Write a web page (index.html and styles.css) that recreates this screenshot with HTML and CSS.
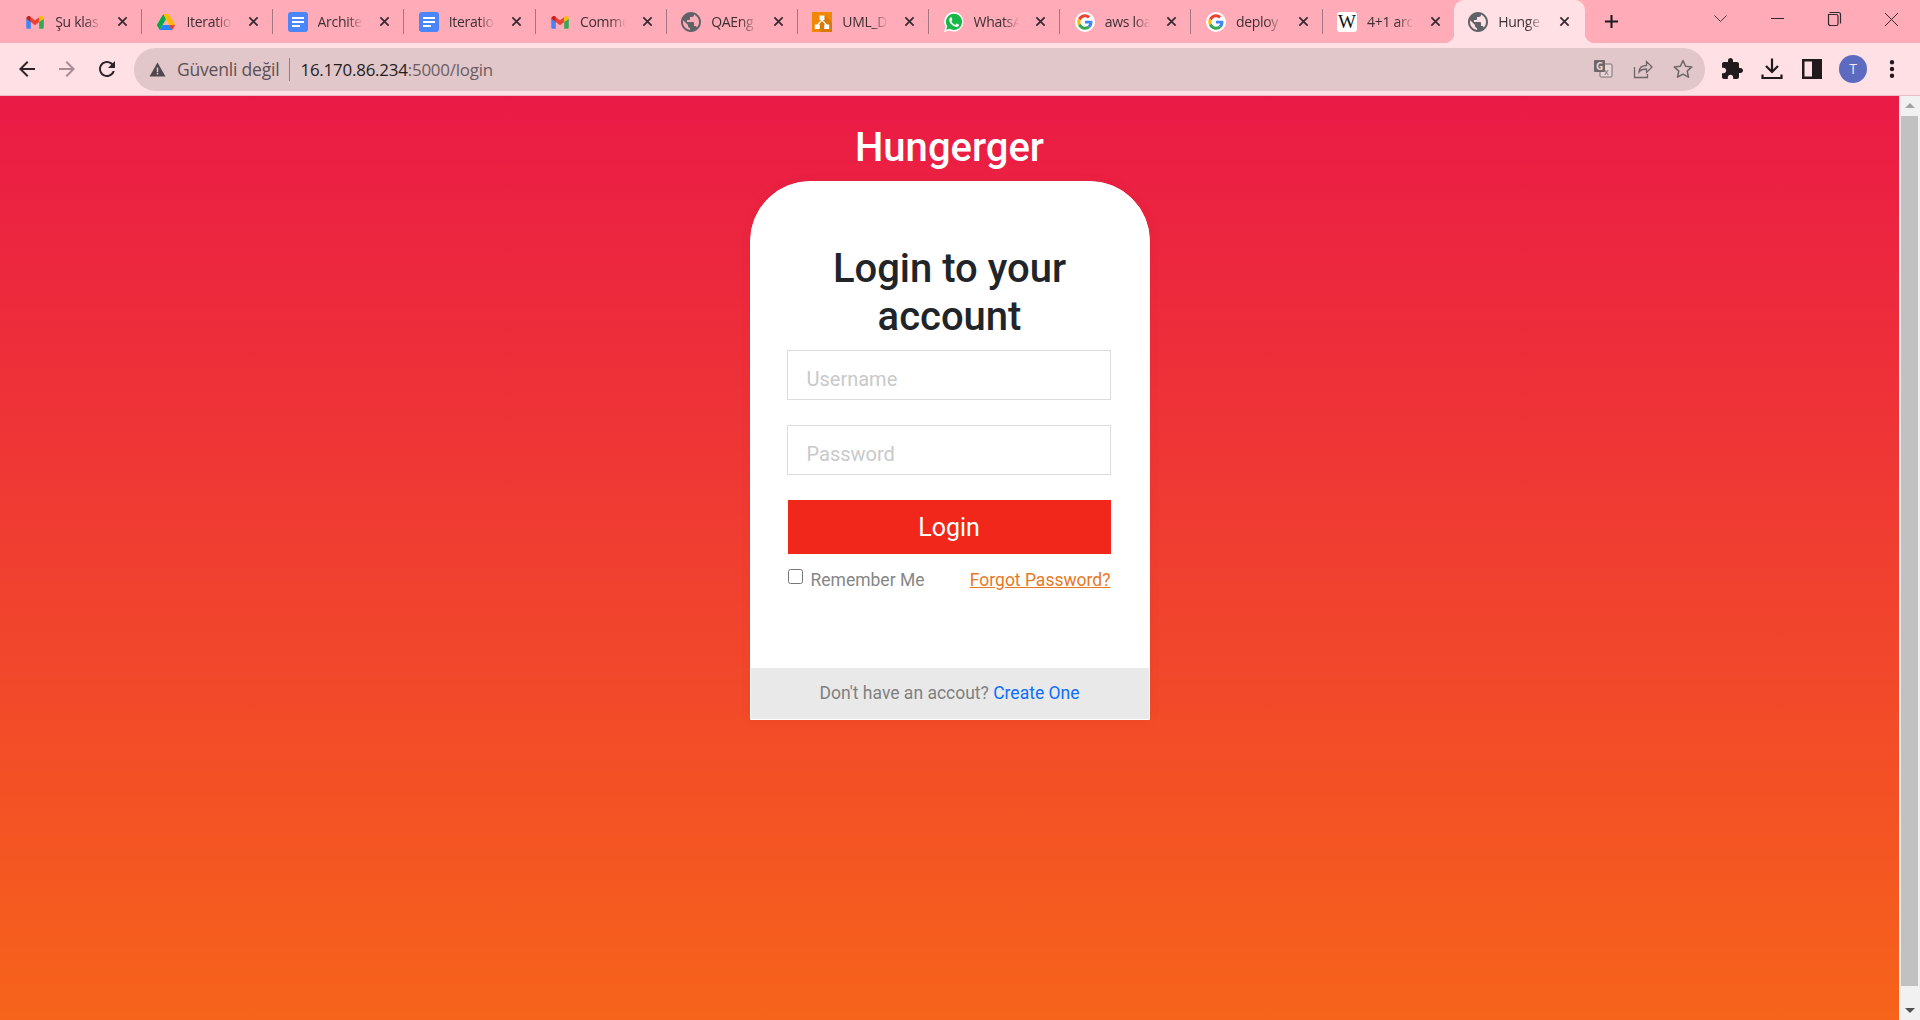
FILE: index.html
```html
<!doctype html>
<html lang="tr">
  <head>
    <meta charset="UTF-8" />
    <title>Hungerger</title>
    <link rel="stylesheet" href="styles.css">
  </head>
  <body>
    <svg class="defs" aria-hidden="true">
      <symbol id="i-gmail" viewBox="0 0 24 24">
        <path fill="#4285f4" d="M1.5 8v10.5c0 1 .7 1.7 1.7 1.7H7V11.5z"/>
        <path fill="#34a853" d="M22.5 8v10.5c0 1-.7 1.7-1.7 1.7H17V11.5z"/>
        <path fill="#ea4335" d="M7 12V6.200l5 3.800 5-3.800V12l-5 3.800z"/>
        <path fill="#c5221f" d="M1.500 8c0-2.700 3-4.100 5-2.600l.5.4V12L1.500 8z"/>
        <path fill="#fbbc04" d="M22.500 8c0-2.700-3-4.100-5-2.600l-.5.4V12l5.500-4z"/>
      </symbol>
      <symbol id="i-drive" viewBox="0 0 24 24">
        <path fill="#00ac47" d="M8.800 2.500 1 15.500l3.500 6L12 8.500z"/>
        <path fill="#ffba00" d="M8.800 2.500h6.400L23 15.500h-7L12 8.500z"/>
        <path fill="#2684fc" d="M8 15.500h8l3.500 6h-15z"/>
        <path fill="#ea4335" d="M16 15.500h7l-3.500 6h-1z"/>
      </symbol>
      <symbol id="i-docs" viewBox="0 0 20 20">
        <rect width="20" height="20" rx="3" fill="#4a86f7"/>
        <path fill="#fff" d="M4 5h12v2H4zM4 9h12v2H4zM4 13h8v2H4z"/>
      </symbol>
      <symbol id="i-globe" viewBox="2 2 20 20">
        <path fill="#5f6368" d="M12 2C6.480 2 2 6.480 2 12s4.480 10 10 10 10-4.480 10-10S17.520 2 12 2zm-1 17.930c-3.950-.490-7-3.850-7-7.930 0-.620.080-1.210.210-1.790L9 15v1c0 1.100.900 2 2 2v1.930zm6.900-2.540c-.260-.810-1-1.390-1.900-1.390h-1v-3c0-.550-.450-1-1-1H8v-2h2c.550 0 1-.450 1-1V7h2c1.100 0 2-.900 2-2v-.410c2.930 1.190 5 4.060 5 7.410 0 2.080-.800 3.970-2.100 5.390z"/>
      </symbol>
      <symbol id="i-drawio" viewBox="0 0 20 20">
        <rect width="20" height="20" fill="#f08705"/>
        <path fill="#d97a04" d="M12.500 3 20 10.500V20H9L3.500 14.500z"/>
        <path fill="none" stroke="#fff" stroke-width="1.200" d="M10 8 5.500 13M10 8l4.500 5"/>
        <path fill="#fff" d="M7.500 3.500h5V8h-5zM2.800 12.500h5V17h-5zM12.200 12.500h5V17h-5z"/>
      </symbol>
      <symbol id="i-whatsapp" viewBox="0 0 20 20">
        <path fill="#fff" d="M10 0a9.800 9.800 0 0 0-8.400 14.800L0 20l5.300-1.400A9.800 9.800 0 1 0 10 0z"/>
        <path fill="#17b845" d="M10 1.700a8.100 8.100 0 0 0-6.800 12.500l-1 3.600 3.700-1A8.100 8.100 0 1 0 10 1.700z"/>
        <path fill="#fff" d="M7.200 5.200c-.300 0-.800.100-1.100.600-.500.600-1 1.500-.900 2.600.200 1.500 1.200 2.900 2.500 4.200 1.400 1.300 2.900 2.200 4.400 2.400 1 .100 2-.300 2.600-1 .400-.400.500-1 .400-1.300l-2.200-1.100c-.200-.100-.400 0-.500.100l-.800 1c-.100.200-.300.200-.500.100-1.600-.700-2.800-1.900-3.600-3.400-.100-.200 0-.400.100-.500l.600-.800c.100-.200.100-.400.100-.500L7.600 5.400c-.100-.200-.200-.200-.400-.200z"/>
      </symbol>
      <symbol id="i-google" viewBox="-7 -7 62 62">
        <circle cx="24" cy="24" r="31" fill="#fff"/>
        <path fill="#ea4335" d="M24 9.500c3.540 0 6.710 1.220 9.210 3.600l6.850-6.850C35.900 2.380 30.470 0 24 0 14.620 0 6.510 5.380 2.560 13.220l7.980 6.190C12.430 13.720 17.740 9.500 24 9.500z"/>
        <path fill="#4285f4" d="M46.980 24.550c0-1.570-.150-3.090-.380-4.550H24v9.020h12.940c-.580 2.960-2.260 5.480-4.780 7.180l7.730 6c4.510-4.180 7.090-10.360 7.090-17.650z"/>
        <path fill="#fbbc05" d="M10.530 28.590c-.480-1.450-.760-2.990-.760-4.590s.270-3.140.760-4.590l-7.980-6.190C.920 16.460 0 20.120 0 24c0 3.880.920 7.540 2.560 10.780l7.970-6.190z"/>
        <path fill="#34a853" d="M24 48c6.480 0 11.930-2.130 16.090-5.810l-7.730-6c-2.150 1.450-4.920 2.300-8.360 2.300-6.260 0-11.570-4.220-13.470-9.910l-7.980 6.190C6.510 42.620 14.620 48 24 48z"/>
      </symbol>
      <symbol id="i-close" viewBox="0 0 12 12">
        <path fill="none" stroke="#352a30" stroke-width="1.900" d="M1.500 1.500l9 9M10.500 1.500l-9 9"/>
      </symbol>
    </svg>

    <div class="tabstrip">
      <div class="tab"><div class="tab-inner"><svg class="favicon"><use href="#i-gmail"/></svg><span class="tab-title">Şu klas</span><svg class="tab-close"><use href="#i-close"/></svg></div></div>
      <div class="tab"><div class="tab-inner"><svg class="favicon"><use href="#i-drive"/></svg><span class="tab-title">Iteratio</span><svg class="tab-close"><use href="#i-close"/></svg></div></div>
      <div class="tab"><div class="tab-inner"><svg class="favicon"><use href="#i-docs"/></svg><span class="tab-title">Archite</span><svg class="tab-close"><use href="#i-close"/></svg></div></div>
      <div class="tab"><div class="tab-inner"><svg class="favicon"><use href="#i-docs"/></svg><span class="tab-title">Iteratio</span><svg class="tab-close"><use href="#i-close"/></svg></div></div>
      <div class="tab"><div class="tab-inner"><svg class="favicon"><use href="#i-gmail"/></svg><span class="tab-title">Comme</span><svg class="tab-close"><use href="#i-close"/></svg></div></div>
      <div class="tab"><div class="tab-inner"><svg class="favicon"><use href="#i-globe"/></svg><span class="tab-title">QAEng</span><svg class="tab-close"><use href="#i-close"/></svg></div></div>
      <div class="tab"><div class="tab-inner"><svg class="favicon"><use href="#i-drawio"/></svg><span class="tab-title">UML_D</span><svg class="tab-close"><use href="#i-close"/></svg></div></div>
      <div class="tab"><div class="tab-inner"><svg class="favicon"><use href="#i-whatsapp"/></svg><span class="tab-title">WhatsA</span><svg class="tab-close"><use href="#i-close"/></svg></div></div>
      <div class="tab"><div class="tab-inner"><svg class="favicon"><use href="#i-google"/></svg><span class="tab-title">aws loa</span><svg class="tab-close"><use href="#i-close"/></svg></div></div>
      <div class="tab"><div class="tab-inner"><svg class="favicon"><use href="#i-google"/></svg><span class="tab-title">deploy</span><svg class="tab-close"><use href="#i-close"/></svg></div></div>
      <div class="tab tab-before-active"><div class="tab-inner"><span class="favicon favicon-w">W</span><span class="tab-title">4+1 arc</span><svg class="tab-close"><use href="#i-close"/></svg></div></div>
      <div class="tab tab-active"><div class="tab-inner"><svg class="favicon"><use href="#i-globe"/></svg><span class="tab-title">Hunge</span><svg class="tab-close"><use href="#i-close"/></svg></div></div>

      <svg class="new-tab" viewBox="0 0 16 16"><path stroke="#1f1a1d" stroke-width="2.200" d="M8 1v14M1 8h14"/></svg>

      <div class="window-btns">
        <svg class="window-btn" viewBox="0 0 57 38"><path fill="none" stroke="#4a3c42" d="M22.500 15.500l6 6 6-6"/></svg>
        <svg class="window-btn" viewBox="0 0 57 38"><path stroke="#33292e" d="M22 18.500h13"/></svg>
        <svg class="window-btn" viewBox="0 0 57 38"><path fill="none" stroke="#33292e" stroke-width="1.200" d="M23.500 12.500h9a2 2 0 0 1 2 2v9M22.500 14.500h8a2 2 0 0 1 1.500 1.500v8a1.500 1.500 0 0 1-1.500 1.500h-6a2 2 0 0 1-2-2z"/></svg>
        <svg class="window-btn" viewBox="0 0 57 38"><path stroke="#33292e" d="M22 13l13 13M35 13L22 26"/></svg>
      </div>
    </div>

    <div class="toolbar">
      <svg class="tool-btn" viewBox="-8 -8 40 40"><path fill="#2c2428" d="M20 11H7.830l5.590-5.590L12 4l-8 8 8 8 1.410-1.410L7.830 13H20v-2z"/></svg>
      <svg class="tool-btn" viewBox="-8 -8 40 40"><path fill="#a58c92" d="M4 11h12.170l-5.590-5.590L12 4l8 8-8 8-1.410-1.410L16.170 13H4v-2z"/></svg>
      <svg class="tool-btn" viewBox="-8 -8 40 40"><path fill="#2c2428" d="M17.650 6.350C16.200 4.900 14.210 4 12 4c-4.420 0-7.990 3.580-7.990 8s3.570 8 7.990 8c3.730 0 6.840-2.550 7.730-6h-2.080c-.820 2.330-3.040 4-5.650 4-3.310 0-6-2.690-6-6s2.690-6 6-6c1.660 0 3.140.690 4.220 1.780L13 11h7V4l-2.350 2.350z"/></svg>

      <div class="omnibox">
        <svg class="warn-icon" viewBox="0 0 16 16"><path fill="#4f474b" d="M8 1.500 15.500 14.500H.5z"/><path fill="#e1c6ca" d="M7.300 6h1.400v4.500H7.300zM7.300 11.300h1.400v1.400H7.300z"/></svg>
        <span class="not-secure">Güvenli değil</span>
        <span class="url"><b>16.170.86.234</b>:5000/login</span>
        <svg class="omni-btn" viewBox="-10 -10 40 40">
          <rect x="7" y="5" width="12" height="13" rx="1" fill="#e7d5d8" stroke="#7a7074"/>
          <rect x="1" y="1" width="11" height="12" rx="1" fill="#6e6669"/>
          <text x="3" y="11" class="translate-g">G</text>
          <text x="11" y="16" class="translate-x">x</text>
        </svg>
        <svg class="omni-btn" viewBox="-10 -10 40 40"><path fill="none" stroke="#6e6669" stroke-width="1.300" d="M1.500 8v10.500h13V15M6 13c.3-4 3-6.500 7.500-6.500V2.500L19 8l-5.500 5.500V10C10 10 7.500 11 6 13z"/></svg>
        <svg class="omni-btn" viewBox="-10 -10 40 40"><path fill="none" stroke="#6e6669" stroke-width="1.500" stroke-linejoin="round" d="M10 1.500l2.600 5.700 6.200.700-4.600 4.200 1.300 6.100L10 15.100l-5.500 3.100 1.300-6.100L1.200 7.900l6.200-.700z"/></svg>
      </div>

      <div class="tool-right">
        <svg class="tool-btn" viewBox="-8 -8 40 40"><path fill="#201a1d" d="M20.500 11H19V7c0-1.100-.900-2-2-2h-4V3.500C13 2.120 11.880 1 10.500 1S8 2.120 8 3.500V5H4c-1.100 0-1.990.900-1.990 2v3.800H3.500c1.490 0 2.700 1.210 2.700 2.700s-1.210 2.700-2.700 2.700H2V20c0 1.100.900 2 2 2h3.800v-1.500c0-1.490 1.210-2.700 2.700-2.700 1.490 0 2.700 1.210 2.700 2.700V22H17c1.100 0 2-.900 2-2v-4h1.500c1.380 0 2.500-1.120 2.500-2.500S21.880 11 20.500 11z"/></svg>
        <svg class="tool-btn" viewBox="-8 -8 40 40"><path fill="none" stroke="#201a1d" stroke-width="2.200" d="M12 1.500v13M6 9l6 6 6-6M2.500 17.500v3.500h19v-3.500"/></svg>
        <svg class="tool-btn" viewBox="-8 -8 40 40"><path fill="#201a1d" d="M2 2h20v20H2zM4.500 4.500v15H12v-15z"/></svg>
        <div class="avatar-btn"><span class="avatar">T</span></div>
        <svg class="tool-btn" viewBox="-8 -8 40 40"><path fill="#201a1d" d="M12 3a2.200 2.200 0 1 0 0 4.400A2.200 2.200 0 0 0 12 3zM12 9.800a2.200 2.200 0 1 0 0 4.400 2.200 2.200 0 0 0 0-4.400zM12 16.600a2.200 2.200 0 1 0 0 4.400 2.200 2.200 0 0 0 0-4.400z"/></svg>
      </div>
    </div>

    <div class="viewport">
      <main class="page">
        <h1 class="brand">Hungerger</h1>
        <div class="card">
          <form class="card-body">
            <h2 class="card-title">Login to your account</h2>
            <input class="field" type="text" placeholder="Username" />
            <input class="field" type="password" placeholder="Password" />
            <button class="login-btn" type="button">Login</button>
            <div class="options">
              <label class="remember"><input type="checkbox" />Remember Me</label>
              <a class="forgot" href="#">Forgot Password?</a>
            </div>
          </form>
          <div class="card-footer">Don't have an accout? <a href="#">Create One</a></div>
        </div>
      </main>
      <div class="scrollbar">
        <span class="arrow arrow-up"></span>
        <span class="thumb"></span>
        <span class="arrow arrow-down"></span>
      </div>
    </div>
  </body>
</html>
```

FILE: styles.css
```css
html,
body {
  height: 100%;
}
body {
  margin: 0;
  display: flex;
  flex-direction: column;
  overflow: hidden;
  font-family: Roboto, "Liberation Sans", sans-serif;
  background: #fee0e5;
}
.defs {
  width: 0;
  height: 0;
  position: absolute;
}

/* browser tabs */
.tabstrip {
  height: 43px;
  flex: none;
  display: flex;
  align-items: center;
  padding-left: 10.8px;
  background: #ffabb8;
}
.tab {
  width: 131.2px;
  height: 43px;
  flex: none;
  box-sizing: border-box;
  display: flex;
  align-items: center;
}
.tab-inner {
  flex: 1;
  min-width: 0;
  height: 25px;
  display: flex;
  align-items: center;
  padding: 0 11px 0 14.4px;
  border-right: 1px solid #a5767f;
}
.tab-before-active .tab-inner,
.tab-active .tab-inner {
  border-right: none;
}
.tab-active {
  position: relative;
  height: 43px;
  background: #fee0e5;
  border-radius: 10px 10px 0 0;
}
.tab-active .tab-close {
  margin-right: 4px;
}
.tab-active::before,
.tab-active::after {
  content: "";
  position: absolute;
  bottom: 0;
  width: 10px;
  height: 10px;
  background: radial-gradient(circle at 0 0, #ffabb8 10px, #fee0e5 10.5px);
}
.tab-active::before {
  left: -10px;
}
.tab-active::after {
  right: -10px;
  background: radial-gradient(circle at 100% 0, #ffabb8 10px, #fee0e5 10.5px);
}
.favicon {
  width: 20px;
  height: 20px;
  flex: none;
}
.favicon-w {
  background: #fff;
  border-radius: 3px;
  color: #111;
  font: 19px/20px "Liberation Serif", serif;
  text-align: center;
}
.tab-title {
  flex: 1;
  min-width: 0;
  margin: 0 12px 0 10px;
  overflow: hidden;
  white-space: nowrap;
  font-family: "Open Sans", sans-serif;
  font-size: 14px;
  letter-spacing: -0.3px;
  color: #3d3035;
  -webkit-mask-image: linear-gradient(to right, #000 60%, transparent 92%);
  mask-image: linear-gradient(to right, #000 60%, transparent 92%);
}
.tab-close {
  width: 11px;
  height: 11px;
  flex: none;
  margin-right: 2px;
}
.new-tab {
  width: 15px;
  height: 15px;
  flex: none;
  margin: 0 0 1px 19px;
}
.window-btns {
  display: flex;
  margin-left: auto;
  align-self: flex-start;
}
.window-btn {
  width: 57px;
  height: 38px;
  display: block;
}

/* address bar */
.toolbar {
  height: 53px;
  flex: none;
  box-sizing: border-box;
  display: flex;
  align-items: center;
  padding: 0 8px 0 7px;
  background: #fee0e5;
  border-bottom: 1px solid #e7bec6;
}
.tool-btn {
  width: 40px;
  height: 40px;
  flex: none;
}
.omnibox {
  flex: 1;
  height: 43px;
  margin-left: 7px;
  padding: 0 2px 0 15px;
  display: flex;
  align-items: center;
  border-radius: 22px;
  background: #e1c6ca;
}
.warn-icon {
  width: 17px;
  height: 17px;
  flex: none;
}
.not-secure {
  margin-left: 11px;
  padding-right: 10px;
  border-right: 1px solid #8f7f84;
  font-family: "Open Sans", sans-serif;
  font-size: 17.5px;
  letter-spacing: -0.2px;
  line-height: 23px;
  color: #5c5055;
}
.url {
  flex: 1;
  margin-left: 10px;
  font-family: "Open Sans", sans-serif;
  font-size: 16.9px;
  letter-spacing: -0.2px;
  color: #6a5e63;
}
.url b {
  font-weight: 400;
  color: #241d20;
}
.omni-btn {
  width: 40px;
  height: 40px;
  flex: none;
}
.translate-g {
  font: 700 10px "Open Sans", sans-serif;
  fill: #e7d5d8;
}
.translate-x {
  font: 9px "Open Sans", sans-serif;
  fill: #6e6669;
}
.tool-right {
  display: flex;
  align-items: center;
  margin-left: 7px;
}
.avatar-btn {
  width: 40px;
  height: 40px;
  display: flex;
  align-items: center;
  justify-content: center;
}
.avatar {
  width: 28px;
  height: 28px;
  margin-left: 2px;
  border-radius: 50%;
  background: #5c6bc0;
  color: #f3e8ee;
  font: 14px/28px "Open Sans", sans-serif;
  text-align: center;
}

/* page */
.viewport {
  flex: 1;
  min-height: 0;
  display: flex;
}
.page {
  flex: 1;
  display: flex;
  flex-direction: column;
  align-items: center;
  background: linear-gradient(to bottom, #ea1a46, #f6631a);
}
.brand {
  margin: 28px 0 9px;
  font-size: 40px;
  font-weight: 500;
  line-height: 48px;
  color: #fff;
}
.card {
  width: 400px;
  box-sizing: border-box;
  border: 1px solid #fff;
  border-top-left-radius: 60px;
  border-top-right-radius: 60px;
  background: #fff;
  box-shadow: 0 0 12px rgba(120, 0, 20, 0.05);
}
.card-body {
  display: flex;
  flex-direction: column;
  padding: 63px 38px 76px 36px;
}
.card-title {
  margin: 0 0 9px 2px;
  font-size: 40px;
  font-weight: 500;
  line-height: 48px;
  text-align: center;
  color: #212529;
}
.field {
  height: 50px;
  box-sizing: border-box;
  margin-bottom: 25px;
  padding: 7px 19px 0;
  border: 1px solid #dcdcdc;
  border-radius: 0;
  outline: none;
  font-family: Roboto, sans-serif;
  font-size: 20px;
}
.field::placeholder {
  color: #c9c9c9;
}
.login-btn {
  height: 54px;
  margin-left: 1px;
  border: none;
  background: #f1271b;
  color: #fff;
  font-family: Roboto, sans-serif;
  font-size: 25px;
}
.options {
  display: flex;
  justify-content: space-between;
  margin: 14px 0 0 1px;
  font-size: 17.5px;
  line-height: 24px;
}
.remember {
  display: flex;
  align-items: flex-start;
  gap: 8px;
  color: #868686;
}
.remember input {
  width: 15px;
  height: 15px;
  margin: 1px 0 0;
}
.forgot {
  color: #e8781f;
}
.card-footer {
  height: 51px;
  box-sizing: border-box;
  padding-top: 13px;
  font-size: 17.5px;
  line-height: 24px;
  text-align: center;
  background: #e9e9e9;
  color: #808080;
}
.card-footer a {
  color: #0d6efd;
  text-decoration: none;
}

/* page scrollbar */
.scrollbar {
  width: 21px;
  flex: none;
  display: flex;
  flex-direction: column;
  align-items: center;
  background: #f1f1f1;
}
.thumb {
  width: 17px;
  flex: 1;
  margin: 8px 0 22px;
  background: #c1c1c1;
}
.arrow {
  width: 0;
  height: 0;
  flex: none;
  border-left: 5px solid transparent;
  border-right: 5px solid transparent;
}
.arrow-up {
  margin-top: 7px;
  border-bottom: 5px solid #a3a3a3;
}
.arrow-down {
  margin-bottom: 7px;
  border-top: 5px solid #505050;
}
```
